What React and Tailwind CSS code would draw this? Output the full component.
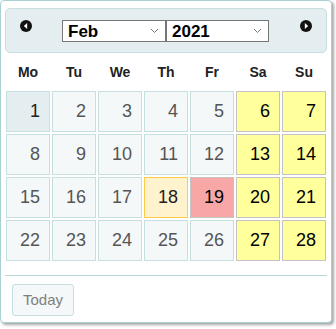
import React from 'react';

const days = ['Mo', 'Tu', 'We', 'Th', 'Fr', 'Sa', 'Su'];

// Feb 2021 starts on a Monday, 28 days -> four full rows
const weeks = [0, 1, 2, 3].map((w) => [1, 2, 3, 4, 5, 6, 7].map((d) => w * 7 + d));

const cellStyle = (day, col) => {
  if (day === 19) return 'bg-[#f7a8a6] border-[#c3c3c3] text-black';
  if (day === 18) return 'bg-[#fff3cd] border-[#fbcb4a] text-[#222]';
  if (col >= 5) return 'bg-[#ffff9c] border-[#c3c3c3] text-black';
  if (day === 1) return 'bg-[#e4eef0] border-[#c5dfe1] text-[#222]';
  return 'bg-[#f4f8f9] border-[#c5dfe1] text-[#555]';
};

const Arrow = ({ dir }) => (
  <svg width="12" height="12" viewBox="0 0 12 12">
    <circle cx="6" cy="6" r="6" fill="#111" />
    {dir === 'prev' ? (
      <polygon points="7.2,3 7.2,9 3.8,6" fill="#fff" />
    ) : (
      <polygon points="4.8,3 4.8,9 8.2,6" fill="#fff" />
    )}
  </svg>
);

const Chevron = () => (
  <svg width="9" height="6" viewBox="0 0 9 6">
    <polyline points="1,1 4.5,4.5 8,1" fill="none" stroke="#777" strokeWidth="1" />
  </svg>
);

const SelectBox = ({ value, className = '' }) => (
  <div
    className={`h-[22px] border border-[#767676] bg-white flex items-center justify-between pl-[5px] pr-[6px] ${className}`}
  >
    <span className="text-[17px] font-bold text-black leading-none">{value}</span>
    <Chevron />
  </div>
);

export default function App() {
  return (
    <div className="w-[336px] h-[329px] bg-white" style={{ fontFamily: '"Liberation Sans", Arial, sans-serif' }}>
      <div className="w-[332px] h-[323px] border border-[#a9d1d4] rounded-[4px] bg-white shadow-[2px_2px_3px_rgba(0,0,0,0.35)] px-[4px] pt-[7px]">
        {/* Header */}
        <div className="h-[45px] border border-[#c5dfe1] bg-[#e4eef0] rounded-[5px] flex items-start pt-[11px]">
          <div className="ml-[14px]">
            <Arrow dir="prev" />
          </div>
          <SelectBox value="Feb" className="ml-[30px] w-[104px]" />
          <SelectBox value="2021" className="w-[103px]" />
          <div className="ml-[31px]">
            <Arrow dir="next" />
          </div>
        </div>

        {/* Day names */}
        <div className="grid grid-cols-[repeat(7,44px)] gap-x-[2px] px-[1px] h-[38px] items-center">
          {days.map((d) => (
            <div key={d} className="text-center text-[14px] font-bold text-[#222]">
              {d}
            </div>
          ))}
        </div>

        {/* Days */}
        <div className="grid grid-cols-[repeat(7,44px)] auto-rows-[41px] gap-[2px] px-[1px]">
          {weeks.map((week) =>
            week.map((day, col) => (
              <div
                key={day}
                className={`border flex items-center justify-end pr-[9px] pb-[1px] text-[18px] ${cellStyle(day, col)}`}
              >
                {day}
              </div>
            ))
          )}
        </div>

        {/* Footer */}
        <div className="mt-[14px] border-t border-[#b8d8db] pt-[8px] pl-[7px]">
          <button className="w-[62px] h-[32px] border border-[#c5dfe1] bg-[#f4f8f9] rounded-[3px] text-[15px] text-[#808080]">
            Today
          </button>
        </div>
      </div>
    </div>
  );
}
